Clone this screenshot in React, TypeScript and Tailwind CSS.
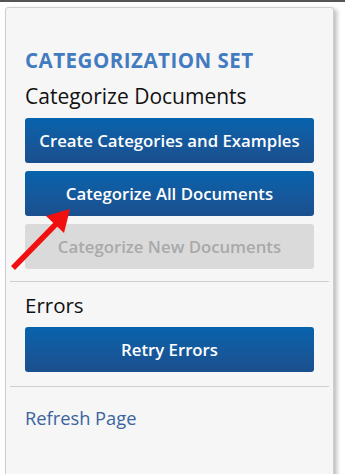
import React from 'react';

function BlueButton({ label }: { label: string }) {
  return (
    <button className="h-[45px] w-full rounded-[3px] bg-gradient-to-b from-[#0563ac] to-[#1b4f8e] text-[16.75px] font-semibold text-white">
      {label}
    </button>
  );
}

export default function App() {
  return (
    <div className="relative h-[474px] w-[345px] overflow-hidden bg-white" style={{ fontFamily: '"Open Sans", "Liberation Sans", sans-serif' }}>
      <div className="h-[2px] w-full bg-[#555]" />
      <div className="ml-[5px] mt-[5px] h-[500px] w-[329px] rounded-[3px] border border-[#cfcfcf] bg-[#f6f6f6] shadow-[3px_2px_4px_rgba(0,0,0,0.25)]">
        <div className="px-[19px] pt-[40px]">
          <h2 className="text-[20.5px] font-bold leading-[24px] tracking-[0.5px] text-[#437bc1]">CATEGORIZATION SET</h2>
          <div className="mt-[12px] text-[21px] leading-[24px] text-[#111]">Categorize Documents</div>
          <div className="mt-[10px] flex flex-col gap-[8px]">
            <BlueButton label="Create Categories and Examples" />
            <BlueButton label="Categorize All Documents" />
            <button disabled className="h-[45px] w-full rounded-[3px] bg-[#dadada] text-[16.75px] font-semibold text-[#a9a9a9]">
              Categorize New Documents
            </button>
          </div>
        </div>
        <div className="mx-[4px] mt-[12px] h-px bg-[#cfcfcf]" />
        <div className="px-[19px] pt-[11px]">
          <div className="text-[20.5px] leading-[24px] text-[#111]">Errors</div>
          <div className="mt-[10px]">
            <BlueButton label="Retry Errors" />
          </div>
        </div>
        <div className="mx-[4px] mt-[14px] h-px bg-[#cfcfcf]" />
        <div className="px-[19px] pt-[19px]">
          <a className="text-[18.3px] leading-[24px] text-[#3b63a0]">Refresh Page</a>
        </div>
      </div>
      <svg className="absolute left-0 top-0" width="345" height="474" viewBox="0 0 345 474">
        <line x1="13" y1="268" x2="58" y2="222" stroke="#f20f0f" strokeWidth="5.5" strokeLinecap="butt" />
        <polygon points="70,209 46,216 64,233" fill="#f20f0f" />
      </svg>
    </div>
  );
}
